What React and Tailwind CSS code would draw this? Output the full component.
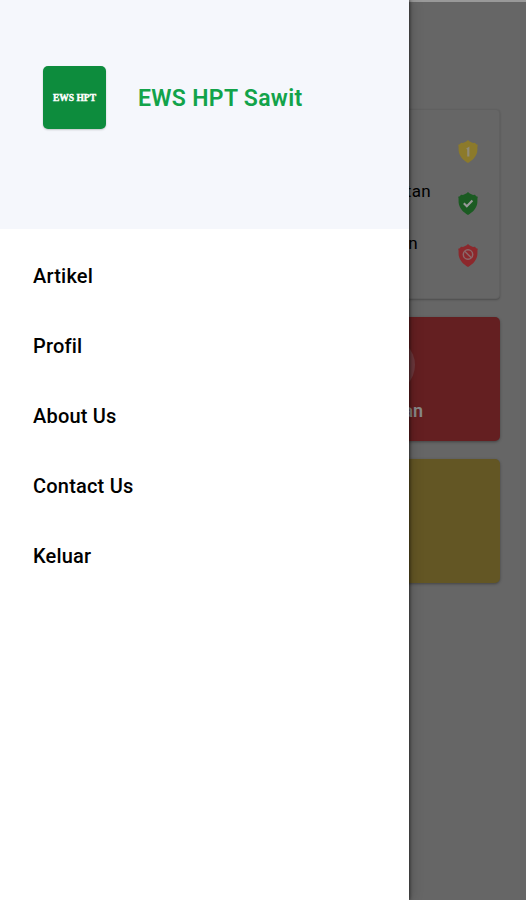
const menuItems = ["Artikel", "Profil", "About Us", "Contact Us", "Keluar"];

const Shield = ({ color, children }) => (
  <svg viewBox="0 0 20 23" className="mb-px h-[23px] w-5 shrink-0" fill="none">
    <path
      d="M10 0C8 2 5.300 3.300 3 2.800 2.300 4 1.400 4.600.2 4.800 1 7.400.2 9.400.9 12.200 2.100 17 5.500 20.200 10 23c4.500-2.800 7.900-6 9.100-10.800.7-2.800-.1-4.800.7-7.400C18.600 4.600 17.700 4 17 2.800 14.700 3.300 12 2 10 0Z"
      fill={color}
    />
    {children}
  </svg>
);

const StatusRow = ({ label, gap, children }) => (
  <div className={`flex h-[52px] items-center justify-end whitespace-nowrap ${gap}`}>
    <span className="mb-[26px] text-[17px] leading-6 tracking-[0.02em] text-black">{label}</span>
    {children}
  </div>
);

const Home = () => (
  <main className="flex h-full flex-col border-t-2 border-[#999] bg-[#666] px-[26px] pt-[107px]">
    <section className="h-[190px] rounded-[4px] border border-[#606060] bg-[#666] pt-4 pr-[21px] shadow-[0_1px_2px_rgba(0,0,0,0.25)]">
      <StatusRow label="Waspada" gap="gap-[90px]">
        <Shield color="#8c7a2b">
          <path d="M8.200 8.500 11.400 6.500V16.500H9.200V9.800Z" fill="#8f8b78" />
        </Shield>
      </StatusRow>
      <StatusRow label="Tidak Perlu Pengendalitan" gap="gap-[27px]">
        <Shield color="#1b5b22">
          <path d="m5.800 11.300 3 3 5.600-5.800" stroke="#999" strokeWidth="2" />
        </Shield>
      </StatusRow>
      <StatusRow label="Perlu Pengendalian" gap="gap-10">
        <Shield color="#8c282c">
          <circle cx="10" cy="10.500" r="4.700" stroke="#8b6769" strokeWidth="1.500" />
          <path d="m6.700 7.200 6.600 6.600" stroke="#8b6769" strokeWidth="1.500" />
        </Shield>
      </StatusRow>
    </section>
    <section className="mt-[18px] flex h-[124px] flex-col items-end rounded-[5px] bg-[#641f21] pt-5 pr-[77px] shadow-[0_1px_3px_rgba(0,0,0,0.35)]">
      <div className="mr-2 size-14 rounded-full bg-[#6b383c]" />
      <span className="mt-1.5 text-lg leading-6 font-semibold text-[#888]">Pengendalian</span>
    </section>
    <section className="mt-[18px] h-[124px] rounded-[5px] bg-[#635624] shadow-[0_1px_3px_rgba(0,0,0,0.35)]" />
  </main>
);

const Drawer = () => (
  <aside className="absolute inset-y-0 left-0 flex w-[409px] flex-col bg-white shadow-[1px_0_3px_rgba(0,0,0,0.5),2px_0_12px_rgba(0,0,0,0.2)]">
    <header className="flex h-[229px] items-start bg-[#f5f7fc] pt-[66px] pl-[43px]">
      <div className="flex size-[63px] items-center justify-center rounded-[5px] bg-[#0d8c3d] shadow-[0_1px_2px_rgba(0,0,0,0.2)]">
        <span className="pt-0.5 font-['Liberation_Serif',serif] text-[9.5px] font-bold text-white [-webkit-text-stroke:0.4px_white]">
          EWS HPT
        </span>
      </div>
      <h1 className="ml-8 pt-[17px] text-[23px] leading-8 font-semibold tracking-[0.014em] whitespace-nowrap text-[#12a34a]">
        EWS HPT Sawit
      </h1>
    </header>
    <nav className="flex flex-col pt-3">
      {menuItems.map((item) => (
        <a
          key={item}
          href="#"
          className="flex h-[70px] items-center pl-[33px] text-xl font-medium tracking-[0.01em] text-black"
        >
          {item}
        </a>
      ))}
    </nav>
  </aside>
);

export default function App() {
  return (
    <div className="relative h-[900px] w-[526px] overflow-hidden font-[Roboto,sans-serif]">
      <Home />
      <Drawer />
    </div>
  );
}
